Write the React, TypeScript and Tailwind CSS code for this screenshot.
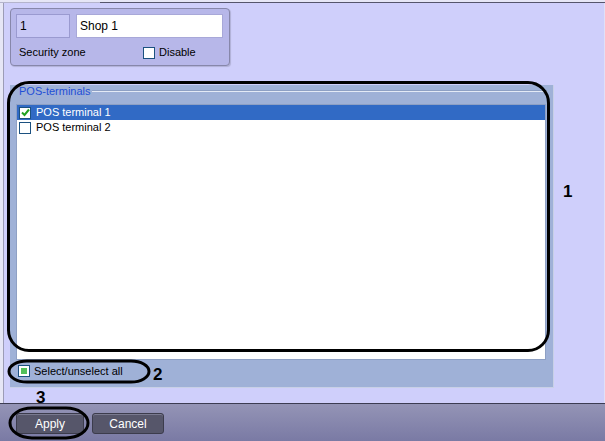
import React from "react";

function Check({ checked }: { checked?: boolean }) {
  return (
    <div className="w-[12px] h-[12px] border border-[#1c5180] bg-white flex items-center justify-center shrink-0">
      {checked && (
        <svg width="9" height="9" viewBox="0 0 9 9">
          <path d="M1 4.5 L3.5 7 L8 1.5" stroke="#21a121" strokeWidth="2" fill="none" />
        </svg>
      )}
    </div>
  );
}

export default function App() {
  return (
    <div className="relative w-[605px] h-[441px] overflow-hidden bg-[#cfcffb] font-['Liberation_Sans',Arial,sans-serif] text-[11px] text-black flex flex-col">
      <div className="h-[404px] flex flex-col border-b border-[#3c3c52]">
        <div className="h-[3px] flex shrink-0">
          <div className="w-[100px] bg-[#e6e6f6] border-b border-[#b4b4cc]" />
          <div className="flex-1 bg-[#e6e6f6] border-b border-[#55556c]" />
        </div>
        <div className="flex-1 flex">
          <div className="w-[4px] bg-[#e6e6f6] border-r border-[#9c9cb6]" />
          <div className="flex-1 pl-[6px] pt-[5px] flex flex-col border-r border-[#e0e0f8]">
            {/* top panel */}
            <div className="w-[220px] h-[58px] rounded-[4px] border border-[#8787aa] bg-[#b7b7e9] shadow-[1px_1px_1px_rgba(0,0,0,0.15)] px-[5px] pt-[5px] flex flex-col">
              <div className="flex gap-[6px]">
                <div className="w-[54px] h-[24px] border border-[#9a9ad0] bg-[#c8c8f6] flex items-center pl-[3px] text-[12px]">1</div>
                <div className="w-[147px] h-[24px] border border-[#a8a8d8] bg-white flex items-center pl-[3px] text-[12px]">Shop 1</div>
              </div>
              <div className="flex items-center mt-[8px] h-[13px]">
                <span className="pl-[3px] w-[127px]">Security zone</span>
                <Check />
                <span className="ml-[4px]">Disable</span>
              </div>
            </div>
            {/* group */}
            <div className="mt-[19px] w-[544px] h-[303px] bg-[#9fb1d7] border-r border-b border-[#c8d0e6] flex flex-col pl-[6px]">
              <div className="h-[19px] flex items-center pr-[6px]">
                <span className="text-[#1f4fd6] ml-[3px] -mt-[7px]">POS-terminals</span>
                <div className="flex-1 ml-[1px] -mt-[7px] border-t border-[#8ea0c4] border-b border-b-[#e4eaf6] h-[2px]" />
              </div>
              <div className="w-[530px] h-[256px] bg-white border border-[#8ea0c4] flex flex-col">
                <div className="h-[15px] bg-[#316ac5] flex items-center pl-[2px] text-white">
                  <Check checked />
                  <span className="ml-[5px]">POS terminal 1</span>
                </div>
                <div className="h-[15px] flex items-center pl-[2px]">
                  <Check />
                  <span className="ml-[5px]">POS terminal 2</span>
                </div>
              </div>
              <div className="h-[14px] mt-[4px] flex items-center pl-[2px]">
                <div className="w-[12px] h-[12px] border border-[#1c5180] bg-white p-[2px]">
                  <div className="w-full h-full bg-[#52c05a]" />
                </div>
                <span className="ml-[4px]">Select/unselect all</span>
              </div>
            </div>
          </div>
        </div>
      </div>
      {/* bottom bar */}
      <div className="flex-1 bg-gradient-to-b from-[#9494b6] to-[#7a7aa4] flex items-start gap-[8px] pl-[16px] pt-[9px]">
        <div className="w-[68px] h-[21px] rounded-[3px] bg-[#56566a] border border-[#3c3c4c] shadow-[inset_0_1px_0_#7a7a90] flex items-center justify-center text-white text-[12px]">Apply</div>
        <div className="w-[72px] h-[21px] rounded-[3px] bg-[#56566a] border border-[#3c3c4c] shadow-[inset_0_1px_0_#7a7a90] flex items-center justify-center text-white text-[12px]">Cancel</div>
      </div>

      {/* annotations */}
      <div className="absolute left-[7px] top-[81px] w-[543px] h-[271px] rounded-[22px] border-[3px] border-black" />
      <div className="absolute left-[563px] top-[179px] text-[17px] font-bold">1</div>
      <svg className="absolute left-[7px] top-[359px]" width="144" height="25" viewBox="0 0 144 25">
        <rect x="2" y="2" width="140" height="21" rx="18" ry="10.5" fill="none" stroke="black" strokeWidth="3" />
      </svg>
      <div className="absolute left-[153px] top-[362px] text-[17px] font-bold">2</div>
      <div className="absolute left-[36px] top-[385px] text-[17px] font-bold">3</div>
      <svg className="absolute left-[8px] top-[406px]" width="82" height="34" viewBox="0 0 82 34">
        <rect x="2" y="2" width="78" height="30" rx="22" ry="15" fill="none" stroke="black" strokeWidth="3" />
      </svg>
    </div>
  );
}
